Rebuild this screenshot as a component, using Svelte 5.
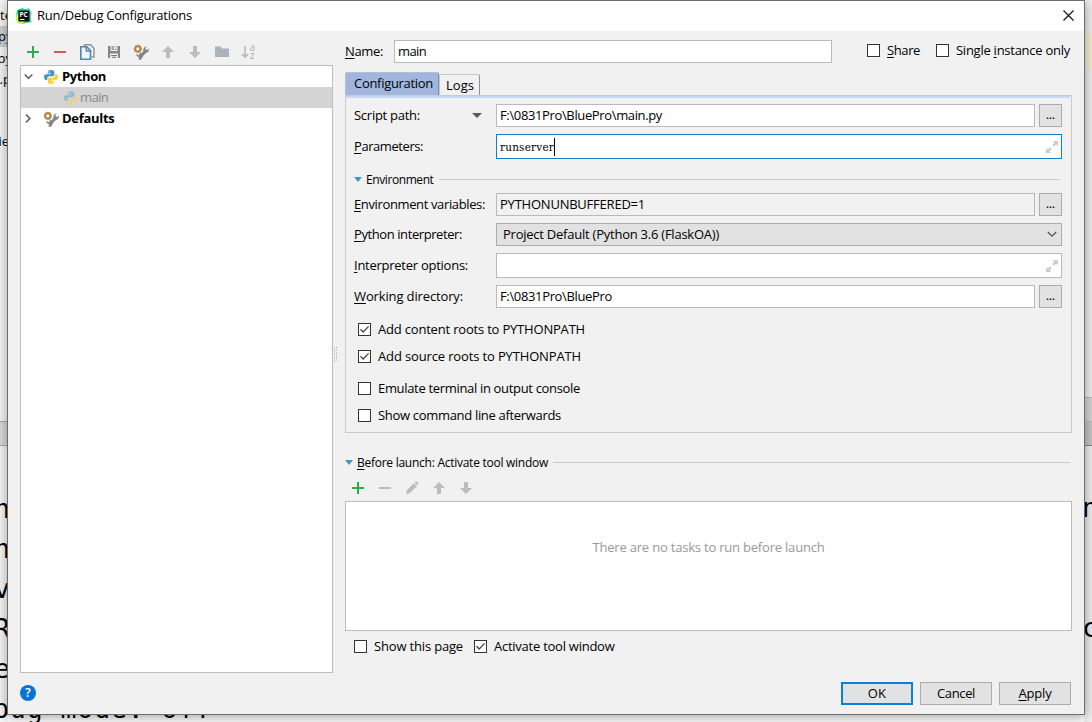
<script>
  // Spreads the glyphs of a label evenly so that it takes up the given width.
  function fit(node, width) {
    const natural = node.getBoundingClientRect().width;
    const count = node.textContent.length;
    if (width && count) node.style.letterSpacing = (width - natural) / count + 'px';
  }

  const split = (s) => {
    const i = s.indexOf('&');
    return i < 0 ? [s, '', ''] : [s.slice(0, i), s[i + 1], s.slice(i + 2)];
  };

  const consoleLeft = ['n', 'n', 'v', 'R', 'e'];
</script>

{#snippet txt(s, w)}
  {@const p = split(s)}
  <span class="txt" use:fit={w}>{p[0]}{#if p[1]}<u>{p[1]}</u>{/if}{p[2]}</span>
{/snippet}

{#snippet check(s, w, on)}
  <label class="check">
    <span class="box">
      {#if on}
        <svg width="11" height="11" viewBox="0 0 11 11"><path d="M1.5 5.3 4.2 8 9.6 2.4" fill="none" stroke="#444" stroke-width="1.25" /></svg>
      {/if}
    </span>
    {@render txt(s, w)}
  </label>
{/snippet}

{#snippet plus()}
  <svg width="16" height="16" viewBox="0 0 16 16"><path d="M7 2h2v5h5v2H9v5H7V9H2V7h5z" fill="#2fa84f" /></svg>
{/snippet}
{#snippet minus(c)}
  <svg width="16" height="16" viewBox="0 0 16 16"><path d="M2 7h12v2H2z" fill={c} /></svg>
{/snippet}
{#snippet up()}
  <svg width="16" height="16" viewBox="0 0 16 16"><path d="M8 2 14 8H10v6H6V8H2z" fill="#bcbcbc" /></svg>
{/snippet}
{#snippet down()}
  <svg width="16" height="16" viewBox="0 0 16 16"><path d="M8 14 14 8H10V2H6v6H2z" fill="#bcbcbc" /></svg>
{/snippet}
{#snippet wrench()}
  <svg width="16" height="16" viewBox="0 0 16 16">
    <path d="M7.500 14.500 9.500 10.500 M8.500 11.500 12.500 7.500" stroke="#858585" stroke-width="2.600" fill="none" />
    <path d="M13.800 2.300 12.400 4.300 12.900 5.800 14.300 6 15.900 4.200C16.400 7 14.800 9 12.400 9L9.800 11.400 8.200 9.800 10.300 7.400C9.800 4.800 11.400 2.600 13.800 2.300z" fill="#858585" />
    <path d="M3.400 9.800 5.600 11.200 6.800 10.300 6.600 8.600C9 9 9.900 10.800 9 12.500L7.700 16 5.400 15.500 6 13.200C4.200 13 3.200 11.500 3.400 9.800z" fill="#858585" />
    <circle cx="4.800" cy="4.900" r="2.700" fill="none" stroke="#b98549" stroke-width="2.200" />
    <path d="M4.800 .8v1.500M4.800 7.500V9M.8 4.900h1.500M7.300 4.900h1.600M1.900 2l1 1M6.700 6.800l1 1M7.700 2l-1 1M1.900 7.800l1-1" stroke="#b98549" stroke-width="1.500" />
  </svg>
{/snippet}
{#snippet python()}
  <svg width="16" height="16" viewBox="0 0 16 16">
    <path d="M7.800 1C5.600 1 4.700 1.800 4.700 3v1.600H8v.6H3C1.600 5.200 1 6.500 1 8s.6 2.900 2 2.900h1.300V9.300C4.300 8 5.300 7.300 6.500 7.300h3C10.600 7.300 11.300 6.500 11.300 5.400V3C11.300 1.700 10 1 7.800 1z" fill="#4493c8" />
    <path d="M8.200 15c2.200 0 3.100-.8 3.100-2v-1.600H8v-.6h5c1.400 0 2-1.300 2-2.800S14.400 5.100 13 5.100h-1v1.600C12 8 11 8.700 9.800 8.700h-3C5.500 8.700 4.700 9.500 4.700 10.600V13c0 1.300 1.300 2 3.500 2z" fill="#fdd037" />
    <circle cx="6.300" cy="2.900" r=".7" fill="#fff" /><circle cx="9.700" cy="13.100" r=".7" fill="#fff" />
  </svg>
{/snippet}
{#snippet expand()}
  <svg class="expand" width="12" height="12" viewBox="0 0 12 12">
    <path d="M6.700 0H12v5.300L10.200 3.500 8 5.700 6.300 4 8.500 1.800zM5.300 12H0V6.700L1.800 8.500 4 6.300 5.700 8 3.500 10.200z" fill="#c8cdd0" />
  </svg>
{/snippet}

<div class="screen">
  <div class="ide">
    <div class="side l">
      <span class="file a">te</span><span class="file b">py</span><span class="file c">py</span><span class="file d">s.p</span>
      <span class="file e">rie</span>
      <div class="bar"></div>
      <div class="con">{#each consoleLeft as c}<span>{c}</span>{/each}</div>
    </div>
    <div class="side r">
      <div class="hl"></div>
      <div class="bar1"></div><div class="bar2"></div>
      <span class="mono n">n</span><span class="mono o">c</span>
    </div>
    <div class="foot mono">bug mode: off</div>
  </div>

  <div class="dialog">
    <header>
      <svg width="16" height="16" viewBox="0 0 16 16">
        <path d="M1 2 6 0 9 1 13 .5 15.500 5 14.500 9 15.500 14 10 15 6 16 1 14.500 0 8z" fill="#21d789" />
        <path d="M10 1 13 .5 15.500 5 14.500 9 15.500 14 12 14.600z" fill="#4fd6c0" />
        <path d="M0 8 2 5V14.600L1 14.500zM1 14.500 3 12H10L6 16z" fill="#f2ee4e" />
        <rect x="2.500" y="2.500" width="11" height="11" fill="#111" />
        <rect x="4" y="11" width="4.500" height="1" fill="#fff" />
        <text x="3.500" y="9" font-size="6.500" font-weight="700" fill="#fff" font-family="Open Sans, sans-serif">PC</text>
      </svg>
      {@render txt('Run/Debug Configurations', 155)}
      <svg class="close" width="11" height="11" viewBox="0 0 11 11"><path d="M.5.5l10 10M10.500.5l-10 10" stroke="#111" stroke-width="1.150" /></svg>
    </header>

    <div class="main">
      <section class="left">
        <div class="tools">
          {@render plus()}
          {@render minus('#cf5b51')}
          <svg width="16" height="16" viewBox="0 0 16 16">
            <path d="M5.500 2V.8h6L15 4.300V13h-2.500" fill="none" stroke="#8d979e" stroke-width="1.500" />
            <path d="M1.800 2.800h6L11.500 6.500v8.700H1.800z" fill="#eef4f8" stroke="#4e87b0" stroke-width="1.600" />
            <path d="M7.300 3v4h4" fill="none" stroke="#4e87b0" stroke-width="1.400" />
          </svg>
          <svg width="16" height="16" viewBox="0 0 16 16">
            <path d="M2 2h2.500v5h7V2H14v12h-2V9.500H4V14H2z" fill="#858585" />
            <path d="M5.500 2h5v4h-5z" fill="#a6a6a6" /><path d="M8 2.500h1.600v2.500H8z" fill="#fff" />
            <path d="M5 11h6v1.200H5z" fill="#4e87b0" /><path d="M6 13h4v1H6z" fill="#858585" />
          </svg>
          {@render wrench()}
          {@render up()}
          {@render down()}
          <svg width="16" height="16" viewBox="0 0 16 16"><path d="M1 2.500h5.500L8 4.500h7V13H1z" fill="#aab4ba" /></svg>
          <svg width="16" height="16" viewBox="0 0 16 16">
            <path d="M4 2v11M1 10l3 3.300L7 10" fill="none" stroke="#b5b5b5" stroke-width="1.400" />
            <text x="8.500" y="6.500" font-size="10" fill="#adadad" font-family="Open Sans, sans-serif">a</text>
            <text x="8.800" y="15" font-size="10" fill="#adadad" font-family="Open Sans, sans-serif">z</text>
          </svg>
        </div>
        <div class="tree">
          <div class="row">
            <svg class="arr" width="9" height="9" viewBox="0 0 9 9"><path d="M.7 2.500 4.500 6.300 8.300 2.500" fill="none" stroke="#666" stroke-width="1.700" /></svg>
            {@render python()}<b>{@render txt('Python', 44)}</b>
          </div>
          <div class="row sel">
            <span class="dim">{@render python()}</span>{@render txt('main', 28)}
          </div>
          <div class="row">
            <svg class="arr" width="9" height="9" viewBox="0 0 9 9"><path d="M2 .7 5.800 4.500 2 8.300" fill="none" stroke="#666" stroke-width="1.700" /></svg>
            {@render wrench()}<b>{@render txt('Defaults', 52.5)}</b>
          </div>
        </div>
      </section>

      <div class="splitter">
        <svg width="4" height="16" viewBox="0 0 4 16"><path d="M.5 1v15M2.500 0v15" stroke="#a8a8a8" stroke-dasharray="1 1.500" /></svg>
      </div>

      <section class="right">
        <div class="namerow">
          <span class="namelab">{@render txt('&Name:', 38)}</span>
          <div class="field name">{@render txt('main', 28)}</div>
          <div class="opts">{@render check('&Share', 33)}{@render check('Single &instance only', 114)}</div>
        </div>

        <div class="tabs">
          <div class="tab on">{@render txt('Configuration', 79)}</div>
          <div class="tab">{@render txt('Logs', 28)}</div>
        </div>

        <div class="panel">
          <div class="line">
            <span class="lab">{@render txt('Script path:', 66)}<i class="tri gray"></i></span>
            <div class="field">{@render txt('F:\\0831Pro\\BluePro\\main.py', 162)}</div>
            <div class="dots">...</div>
          </div>
          <div class="line">
            <span class="lab">{@render txt('&Parameters:', 69)}</span>
            <div class="field tall focus"><span class="param" use:fit={54}>runserver</span><i class="caret"></i>{@render expand()}</div>
          </div>
          <div class="sep env"><i class="tri"></i>{@render txt('Environment', 67.5)}<hr /></div>
          <div class="line">
            <span class="lab">{@render txt('&Environment variables:', 131)}</span>
            <div class="field ro">{@render txt('PYTHONUNBUFFERED=1', 145)}</div>
            <div class="dots">...</div>
          </div>
          <div class="line">
            <span class="lab">{@render txt('&Python interpreter:', 108)}</span>
            <div class="field combo">{@render txt('Project Default (Python 3.6 (FlaskOA))', 216)}
              <svg class="chev" width="10" height="7" viewBox="0 0 10 7"><path d="M.8 1 5 5.200 9.200 1" fill="none" stroke="#555" stroke-width="1.300" /></svg>
            </div>
          </div>
          <div class="line">
            <span class="lab">{@render txt('&Interpreter options:', 114)}</span>
            <div class="field tall">{@render expand()}</div>
          </div>
          <div class="line">
            <span class="lab">{@render txt('&Working directory:', 109)}</span>
            <div class="field">{@render txt('F:\\0831Pro\\BluePro', 112)}</div>
            <div class="dots">...</div>
          </div>
          <div class="checks">
            {@render check('Add content roots to PYTHONPATH', 207, true)}
            {@render check('Add source roots to PYTHONPATH', 203, true)}
          </div>
          <div class="checks second">
            {@render check('Emulate terminal in output console', 202)}
            {@render check('Show command line afterwards', 183)}
          </div>
        </div>

        <div class="sep before"><i class="tri"></i>{@render txt('&Before launch: Activate tool window', 191)}<hr /></div>
        <div class="tools small">
          {@render plus()}
          {@render minus('#bcbcbc')}
          <svg width="16" height="16" viewBox="0 0 16 16"><path d="M2 14 3 10 9.800 3.200 12.800 6.200 6 13zM10.500 2.500 12 1.600 14.300 2.200 14 4.400 13.400 5.500z" fill="#bcbcbc" /></svg>
          {@render up()}
          {@render down()}
        </div>
        <div class="tasks">{@render txt('There are no tasks to run before launch', 232)}</div>
        <div class="after">{@render check('Show this page', 89)}{@render check('Activate tool window', 120.5, true)}</div>
      </section>
    </div>

    <footer>
      <div class="help">?</div>
      <div class="btn ok">{@render txt('OK', 18.5)}</div>
      <div class="btn">{@render txt('Cancel', 38)}</div>
      <div class="btn">{@render txt('&Apply', 33)}</div>
    </footer>
  </div>
</div>

<style>
  :global(body) { margin: 0; overflow: hidden; }
  .screen { position: relative; width: 1092px; height: 722px; overflow: hidden; background: #fff; color: #000; font: 13px/17px "Open Sans", "Noto Sans", "Noto Sans CJK SC", sans-serif; }
  .screen * { box-sizing: border-box; }
  svg { display: block; flex: none; }
  .txt { display: inline-block; white-space: pre; flex: none; }
  u { text-decoration: underline; text-decoration-skip-ink: none; text-underline-offset: 1.5px; text-decoration-thickness: 1px; }

  .side { position: absolute; top: 0; bottom: 0; width: 8px; overflow: hidden; background: #f7f7f7; }
  .side.l { left: 0; }
  .side.r { right: 0; background: #efefef; }
  .file { position: absolute; right: 0; white-space: pre; }
  .file.a { top: 7px; right: -4px; } .file.b { top: 26px; height: 21px; width: 8px; background: #d0d0d0; line-height: 21px; text-indent: -2px; }
  .file.c { top: 50px; right: -4px; } .file.d { top: 71px; right: -3px; } .file.e { top: 133px; right: -1px; }
  .bar { position: absolute; top: 421px; width: 8px; height: 25px; background: #dadada; border: solid #aaa; border-width: 1px 0; }
  .con { position: absolute; top: 489px; right: -2px; display: flex; flex-direction: column; width: 16px; font: 26.5px/40px "DejaVu Sans Mono", monospace; }
  .mono { font: 26.5px/30px "DejaVu Sans Mono", monospace; position: absolute; }
  .n { left: -2px; top: 493px; } .o { left: -2px; top: 613px; }
  .hl { position: absolute; top: 33px; width: 8px; height: 36px; background: #f5f0d5; }
  .bar1, .bar2 { position: absolute; top: 397px; width: 8px; height: 25px; background: #d6d6d6; border-top: 1px solid #bbb; }
  .bar2 { top: 421px; background: #c6c6c6; border-bottom: 1px solid #888; }
  .foot { left: -7px; top: 694px; white-space: pre; letter-spacing: .9px; }

  .dialog { position: absolute; left: 7px; top: 0; width: 1078px; height: 715px; border: 1px solid #6c6c6c; background: #f1f1f1; box-shadow: 0 2px 12px rgba(0, 0, 0, .38); display: flex; flex-direction: column; }
  header { height: 30px; background: #fff; display: flex; align-items: center; gap: 5px; padding: 0 10px 1px 8px; flex: none; }
  .close { margin-left: auto; }
  .main { display: flex; padding: 0 12px; height: 642px; flex: none; }
  .left { width: 313px; display: flex; flex-direction: column; }
  .tools { display: flex; gap: 11px; padding: 13px 0 5px 5px; }
  .tree { flex: 1; border: 1px solid #bdbdbd; background: #fff; }
  .row { height: 21px; display: flex; align-items: center; padding-left: 3px; }
  .row .arr { margin-right: 10px; }
  .row b { margin-left: 3px; }
  .sel { background: #d4d4d4; color: #8a8a8a; padding-left: 42px; }
  .sel > :global(.txt) { margin-left: 1px; }
  .dim { opacity: .42; }
  .splitter { width: 12px; display: flex; padding: 316px 0 0 1px; }
  .right { width: 727px; padding-top: 9px; }
  .namerow { display: flex; height: 23px; }
  .namelab { width: 49px; line-height: 22px; }
  .field { flex: 1; height: 23px; border: 1px solid #bababa; background: #fff; display: flex; align-items: center; padding: 0 3px; min-width: 0; }
  .field.name { flex: none; width: 438px; }
  .opts { display: flex; gap: 16px; margin-left: auto; height: 21px; padding-right: 2px; align-items: center; }
  .check { display: flex; align-items: center; gap: 7px; height: 13px; }
  .box { width: 13px; height: 13px; border: 1px solid #333; background: #fff; flex: none; }
  .tabs { display: flex; align-items: flex-end; margin-top: 9px; height: 23px; }
  .tab { height: 21px; width: 41px; border: 1px solid #c6c6c6; border-width: 1px 1px 0; border-right: 1px solid #8f8f8f; padding: 2px 0 0 6px; border-radius: 2px 2px 0 0; }
  .tab.on { height: 23px; width: 94px; background: #a0b6de; border-color: #b7c0d0 #8390a9 #b7c0d0 #b7c0d0; padding: 2px 0 0 8px; }
  .panel { height: 338px; border: 1px solid #cbcbcb; padding: 6px 9px 0 8px; display: flex; flex-direction: column; gap: 7px; }
  .panel::before { content: ''; height: 2px; margin: -6px -8px -1px; background: #c6d9ef; flex: none; }
  .line { display: flex; flex: none; align-items: center; }
  .lab { width: 142px; display: flex; align-items: center; flex: none; height: 21px; }
  .tri { border: solid transparent; border-width: 5px 4px 0; border-top-color: #4a93c4; width: 0; height: 0; flex: none; }
  .tri.gray { border-width: 5px 5px 0; border-top-color: #5a5a5a; margin-left: auto; margin-right: 14px; }
  .dots { width: 23px; height: 23px; margin-left: 4px; border: 1px solid #acacac; background: #e2e2e2; text-align: center; line-height: 20px; font-weight: 600; font-size: 11px; }
  .tall { height: 25px; }
  .focus { border-color: #0a80d8; }
  .param { font: 10.5px/16px "DejaVu Serif", serif; display: inline-block; }
  .caret { width: 1px; height: 18px; background: #000; }
  .expand { margin-left: auto; }
  .ro { background: #f1f1f1; }
  .combo { background: #e2e2e2; border-color: #acacac; padding-left: 6px; }
  .chev { margin-left: auto; margin-right: 1px; }
  .sep { display: flex; align-items: center; font-size: 12px; }
  hr { flex: 1; height: 1px; border: 0; margin: 0 0 0 5px; background: #cbcbcb; }
  .env { height: 27px; margin-bottom: -7px; padding-right: 2px; flex: none; }
  .sep .tri { margin-right: 4px; }
  .checks { display: flex; flex-direction: column; gap: 14px; padding: 8px 0 0 4px; flex: none; }
  .second { padding-top: 12px; }
  .before { margin-top: 22px; height: 15px; padding-right: 2px; }
  .small { padding: 10px 0 5px 5px; }
  .tasks { height: 130px; border: 1px solid #bdbdbd; background: #fff; color: #999; text-align: center; padding-top: 37px; }
  .after { display: flex; gap: 11px; padding: 9px 0 0 9px; }
  footer { display: flex; padding: 9px 13px 0 12px; gap: 7px; }
  .help { width: 16px; height: 16px; margin: 3px auto 0 0; border-radius: 50%; background: #0a73d1; color: #fff; text-align: center; line-height: 16px; font-size: 12px; font-weight: 600; }
  .btn { width: 72px; height: 23px; border: 1px solid #acacac; background: #e2e2e2; display: flex; align-items: center; justify-content: center; padding-bottom: 1px; }
  .ok { border: 2px solid #0a80d8; }
</style>
